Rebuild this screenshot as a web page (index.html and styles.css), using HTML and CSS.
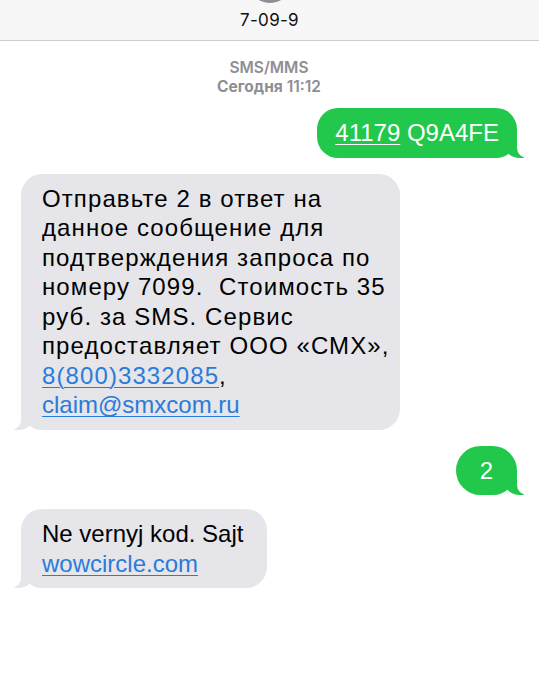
FILE: index.html
```html
<!DOCTYPE html>
<html lang="ru">
<head>
<meta charset="utf-8">
<title>7-09-9</title>
<link rel="stylesheet" href="styles.css">
</head>
<body>
<header class="nav">
  <div class="avatar"></div>
  <div class="nav-title">7-09-9</div>
</header>
<main class="thread">
  <div class="meta">
    <div class="meta-service">SMS/MMS</div>
    <div class="meta-date"><b>Сегодня</b> 11:12</div>
  </div>
  <div class="bubble sent first"><span class="ul">41179</span> Q9A4FE</div>
  <div class="bubble recv long">Отправьте 2 в ответ на<br>данное сообщение для<br>подтверждения запроса по<br>номеру 7099.&nbsp; Стоимость 35<br>руб. за SMS. Сервис<br>предоставляет ООО «СМХ»,<br><a class="link" href="#">8(800)3332085</a>,<br><a class="link latin" href="#">claim@smxcom.ru</a></div>
  <div class="bubble sent short">2</div>
  <div class="bubble recv last">Ne vernyj kod. Sajt<br><a class="link" href="#">wowcircle.com</a></div>
</main>
</body>
</html>
```
FILE: styles.css
```css
html, body {
  margin: 0;
  padding: 0;
  background: #ffffff;
}
body {
  font-family: Inter, "Liberation Sans", Arial, sans-serif;
  color: #000;
  overflow: hidden;
}
.nav {
  height: 40px;
  background: #f7f7f7;
  border-bottom: 1px solid #cdcdcd;
  display: flex;
  flex-direction: column;
  align-items: center;
  overflow: hidden;
}
.avatar {
  width: 44px;
  height: 44px;
  border-radius: 50%;
  background: #8f8f95;
  margin-top: -41px;
  flex: none;
}
.nav-title {
  margin-top: 7px;
  font-size: 17px;
  line-height: 20px;
  letter-spacing: 0.3px;
  color: #111;
}
.thread {
  display: flex;
  flex-direction: column;
  padding: 0 22px 0 21px;
}
.meta {
  margin-top: 17px;
  text-align: center;
  color: #8e8e93;
  font-size: 15.5px;
  line-height: 19px;
  font-weight: 600;
}
.meta-date b {
  font-weight: 700;
}
.bubble {
  position: relative;
  z-index: 0;
  font-family: "Liberation Sans", Arial, sans-serif;
  font-size: 24px;
  line-height: 29.5px;
  padding: 10px 18px;
  border-radius: 21px;
  width: fit-content;
}
.bubble::before,
.bubble::after {
  content: "";
  position: absolute;
  z-index: -1;
  bottom: 0;
  height: 25px;
}
.sent {
  align-self: flex-end;
  background: #22c84b;
  color: #fff;
}
.sent::before {
  right: -7px;
  width: 20px;
  background: #22c84b;
  border-bottom-left-radius: 16px 14px;
}
.sent::after {
  right: -26px;
  width: 26px;
  background: #fff;
  border-bottom-left-radius: 10px;
}
.recv {
  align-self: flex-start;
  background: #e5e5ea;
  color: #000;
  padding-left: 21px;
}
.recv::before {
  left: -7px;
  width: 20px;
  background: #e5e5ea;
  border-bottom-right-radius: 16px 14px;
}
.recv::after {
  left: -26px;
  width: 26px;
  background: #fff;
  border-bottom-right-radius: 10px;
}
.first {
  margin-top: 12px;
}
.long {
  margin-top: 16px;
  padding-right: 10px;
  letter-spacing: 1.1px;
}
.short {
  margin-top: 16px;
  padding: 10px 24px;
  border-radius: 25px;
}
.last {
  margin-top: 14px;
  padding-right: 24px;
}
.ul {
  text-decoration: underline;
  text-decoration-thickness: 1px;
  text-underline-offset: 3px;
}
.link {
  color: #2b7bd9;
  text-decoration: underline;
  text-decoration-thickness: 1px;
  text-underline-offset: 3px;
}
.latin {
  letter-spacing: 0;
}
```
